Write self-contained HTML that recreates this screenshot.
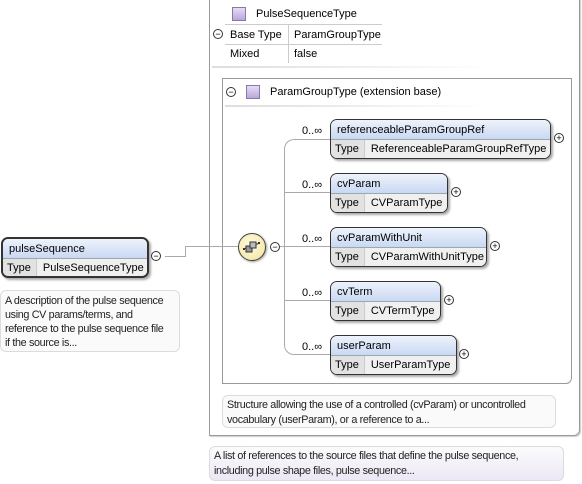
<!DOCTYPE html>
<html><head><style>
*{margin:0;padding:0;box-sizing:border-box}
body{width:582px;height:484px;background:#fff;font-family:"Liberation Sans",sans-serif;font-size:11px;color:#000;position:relative;overflow:hidden}
.a{position:absolute}
.el{position:absolute;border:1px solid #333;border-radius:7px;background:#ececec;box-shadow:2px 2px 2px #aaa;overflow:hidden}
.el .h{height:20px;background:linear-gradient(#eef3fc,#c9d8f3);border-bottom:1px solid #9aa;padding:4px 6px 0 6px;white-space:nowrap}
.el .r{height:19px;display:flex;white-space:nowrap}
.el .r span:first-child{padding:3px 5px 0 4px;border-right:1px solid #ccc;background:#e2e2e2}
.el .r span:last-child{padding:3px 6px 0 6px;background:#f0f0f0;flex:1}
.pm{position:absolute;width:10px;height:10px;border:1px solid #333;border-radius:50%;background:#fff;font-size:9px;line-height:8px;text-align:center}
.doc{position:absolute;border:1px solid #dcdcdc;border-radius:6px;background:#fafafa;padding:4px 4px;line-height:15px;color:#222;letter-spacing:-0.35px;font-size:10.8px}
.sq{position:absolute;width:14px;height:14px;border:1px solid #8878b0;background:linear-gradient(#e6dcf6,#b8a8d8)}
.ln{position:absolute;background:#aaa}
</style></head><body>
<div class="a" style="left:209px;top:-2px;width:371px;height:438px;border:1px solid #999;border-radius:0 0 6px 0;box-shadow:1px 1px 1px #ccc"></div>
<div class="sq" style="left:232px;top:7px"></div>
<div class="a" style="left:256px;top:8px">PulseSequenceType</div>
<div class="pm" style="left:213px;top:29px">−</div>
<div class="a" style="left:225px;top:24px;width:157px;height:1px;background:#ccc"></div>
<div class="a" style="left:225px;top:44px;width:157px;height:1px;background:#ccc"></div>
<div class="a" style="left:288px;top:25px;width:1px;height:38px;background:#ccc"></div>
<div class="a" style="left:230px;top:29px">Base Type</div>
<div class="a" style="left:294px;top:29px">ParamGroupType</div>
<div class="a" style="left:230px;top:48px">Mixed</div>
<div class="a" style="left:294px;top:48px">false</div>
<div class="a" style="left:212px;top:66px;width:280px;height:2px;background:linear-gradient(90deg,#ddd,#eee,#fff)"></div>

<div class="a" style="left:222px;top:78px;width:350px;height:306px;border:1px solid #999;border-radius:0 0 6px 0;background:#fff"></div>
<div class="pm" style="left:226px;top:87px">−</div>
<div class="sq" style="left:246px;top:85px"></div>
<div class="a" style="left:270px;top:86px">ParamGroupType (extension base)</div>
<div class="a" style="left:225px;top:105px;width:265px;height:2px;background:linear-gradient(90deg,#ddd,#eee,#fff)"></div>

<div class="a" style="left:284px;top:139px;width:46px;height:216px;border:1px solid #aaa;border-right:none;border-radius:10px 0 0 10px"></div>
<div class="ln" style="left:285px;top:192px;width:45px;height:1px"></div>
<div class="ln" style="left:285px;top:246px;width:45px;height:1px"></div>
<div class="ln" style="left:285px;top:300px;width:45px;height:1px"></div>
<div class="ln" style="left:165px;top:256px;width:21px;height:1px"></div>
<div class="ln" style="left:185px;top:246px;width:1px;height:11px"></div>
<div class="ln" style="left:185px;top:246px;width:55px;height:1px"></div>
<div class="ln" style="left:280px;top:246px;width:5px;height:1px"></div>

<div class="a" style="left:238px;top:233px;width:28px;height:28px;border:1px solid #444;border-radius:50%;background:radial-gradient(circle at 45% 40%,#fffbe0,#f3e29a);box-shadow:1px 1px 2px #999"></div>
<svg class="a" style="left:242px;top:238px" width="20" height="18" viewBox="0 0 20 18"><line x1="1" y1="11" x2="18" y2="5" stroke="#333"/><rect x="4" y="8" width="6" height="6" fill="#999" stroke="#333"/><rect x="8" y="4" width="6" height="6" fill="#bbb" stroke="#333"/><rect x="1" y="10" width="2" height="2" fill="#333"/><rect x="16" y="4" width="2" height="2" fill="#333"/></svg>
<div class="pm" style="left:270px;top:242px">−</div>

<div class="a" style="left:302px;top:125px">0..∞</div>
<div class="el" style="left:330px;top:119px;width:221px;height:40px"><div class="h">referenceableParamGroupRef</div><div class="r"><span>Type</span><span>ReferenceableParamGroupRefType</span></div></div>
<div class="pm" style="left:554px;top:133px">+</div>
<div class="a" style="left:302px;top:179px">0..∞</div>
<div class="el" style="left:330px;top:173px;width:118px;height:40px"><div class="h">cvParam</div><div class="r"><span>Type</span><span>CVParamType</span></div></div>
<div class="pm" style="left:451px;top:187px">+</div>
<div class="a" style="left:302px;top:233px">0..∞</div>
<div class="el" style="left:330px;top:227px;width:157px;height:40px"><div class="h">cvParamWithUnit</div><div class="r"><span>Type</span><span>CVParamWithUnitType</span></div></div>
<div class="pm" style="left:490px;top:241px">+</div>
<div class="a" style="left:302px;top:287px">0..∞</div>
<div class="el" style="left:330px;top:281px;width:111px;height:40px"><div class="h">cvTerm</div><div class="r"><span>Type</span><span>CVTermType</span></div></div>
<div class="pm" style="left:444px;top:295px">+</div>
<div class="a" style="left:302px;top:341px">0..∞</div>
<div class="el" style="left:330px;top:335px;width:127px;height:40px"><div class="h">userParam</div><div class="r"><span>Type</span><span>UserParamType</span></div></div>
<div class="pm" style="left:459px;top:349px">+</div>

<div class="doc" style="left:222px;top:395px;width:334px;height:33px;padding-top:2px">Structure allowing the use of a controlled (cvParam) or uncontrolled vocabulary (userParam), or a reference to a...</div>
<div class="doc" style="left:209px;top:446px;width:355px;height:35px;padding-top:2px;background:linear-gradient(#fbfbfd,#ece8f4)">A list of references to the source files that define the pulse sequence, including pulse shape files, pulse sequence...</div>

<div class="el" style="left:1px;top:237px;width:148px;height:41px;border-width:2px"><div class="h">pulseSequence</div><div class="r"><span>Type</span><span>PulseSequenceType</span></div></div>
<div class="pm" style="left:151px;top:251px">−</div>
<div class="doc" style="left:0px;top:290px;width:180px;height:62px;padding:3px 10px 3px 4px;line-height:14px">A description of the pulse sequence using CV params/terms, and reference to the pulse sequence file if the source is...</div>
</body></html>
